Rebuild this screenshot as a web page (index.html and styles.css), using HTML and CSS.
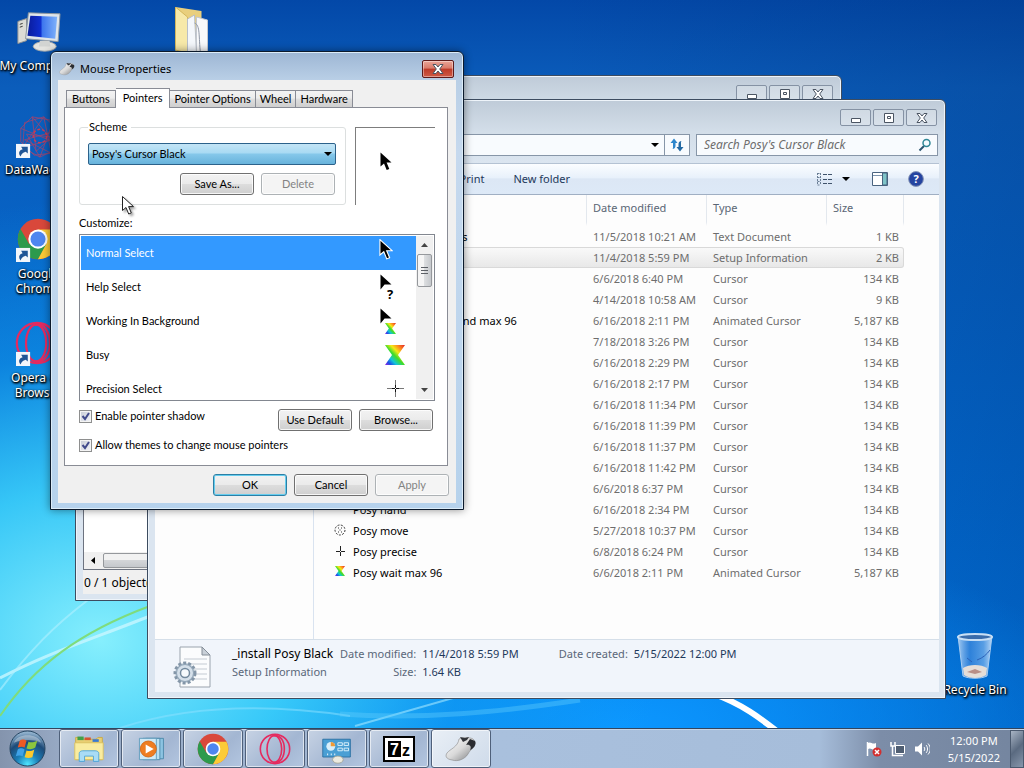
FILE: index.html
```html
<!DOCTYPE html>
<html lang="en">
<head>
    <meta charset="UTF-8">
    <meta name="viewport" content="width=device-width, initial-scale=1.0">
    <title>Desktop</title>
    <link rel="stylesheet" href="styles.css">
</head>
<body>
    <!-- Shared icons -->
    <svg class="sprite" aria-hidden="true">
        <defs>
            <linearGradient id="rainbow" x1="1" y1="0" x2="0" y2="1">
                <stop offset="0" stop-color="#e0202a"/>
                <stop offset=".2" stop-color="#ff8a1c"/>
                <stop offset=".36" stop-color="#f4e916"/>
                <stop offset=".52" stop-color="#3fdc28"/>
                <stop offset=".7" stop-color="#12c6d8"/>
                <stop offset=".85" stop-color="#1d50e8"/>
                <stop offset="1" stop-color="#a020e0"/>
            </linearGradient>
            <linearGradient id="mouse-fill" x1="0" y1="0" x2="1" y2="1">
                <stop offset="0" stop-color="#ffffff"/>
                <stop offset=".5" stop-color="#d9d9d9"/>
                <stop offset="1" stop-color="#77797c"/>
            </linearGradient>
            <linearGradient id="screen" x1="0" y1="0" x2="1" y2="0">
                <stop offset="0" stop-color="#0a1c9c"/>
                <stop offset=".45" stop-color="#0f2fd0"/>
                <stop offset=".5" stop-color="#3d76ee"/>
                <stop offset="1" stop-color="#7fb2fa"/>
            </linearGradient>
            <linearGradient id="glass" x1="0" y1="0" x2="1" y2="0">
                <stop offset="0" stop-color="#b5d5f5" stop-opacity=".9"/>
                <stop offset=".35" stop-color="#4b8fe0" stop-opacity=".6"/>
                <stop offset=".75" stop-color="#7db4ee" stop-opacity=".7"/>
                <stop offset="1" stop-color="#cfe4fa" stop-opacity=".9"/>
            </linearGradient>
            <radialGradient id="orb" cx=".5" cy=".95" r=".9">
                <stop offset="0" stop-color="#4fe6ff"/>
                <stop offset=".35" stop-color="#1a7fb8"/>
                <stop offset=".7" stop-color="#1d4a78"/>
                <stop offset="1" stop-color="#8fb0cc"/>
            </radialGradient>
        </defs>
        <symbol id="arrow" viewBox="0 0 12 19">
            <path d="M0.5 0.5V14.5L4 11.5L6.7 18L9.3 16.9L6.6 10.6H11.5Z"/>
        </symbol>
        <symbol id="arrow-head" viewBox="0 0 12 16">
            <path d="M0.5 0.5V15.5L4.6 10.6H11.5Z"/>
        </symbol>
        <symbol id="hourglass" viewBox="0 0 20 20">
            <path d="M0 0H20L13 10L20 20H0L7 10Z" fill="url(#rainbow)"/>
        </symbol>
        <symbol id="crosshair" viewBox="0 0 17 17">
            <path d="M8.5 0V17M0 8.5H17" stroke="#777" fill="none"/>
            <path d="M8.500 5V12M5 8.500H12" stroke="#111" fill="none"/>
            <path d="M8 8H9V9H8Z" fill="#fff"/>
        </symbol>
        <symbol id="chrome" viewBox="0 0 48 48">
            <circle cx="24" cy="24" r="23" fill="#d9483b"/>
            <path d="M4.100 12.500A23 23 0 0 0 24 47L34 29.800L24 24L14 29.800Z" fill="#2c9a4d"/>
            <path d="M24 13H44.200A23 23 0 0 1 24 47L33.500 29.500Z" fill="#fbcb37"/>
            <circle cx="24" cy="24" r="11" fill="#fff"/>
            <circle cx="24" cy="24" r="8.600" fill="#4e86f0"/>
        </symbol>
        <symbol id="opera" viewBox="0 0 48 48">
            <g fill="none" stroke="#e52a5f" stroke-width="2.400">
                <circle cx="24" cy="24" r="22"/>
                <ellipse cx="23" cy="24" rx="11" ry="20"/>
                <path d="M22 4C32 2 38 12 38 24S32 46 22 44"/>
            </g>
        </symbol>
        <symbol id="shortcut" viewBox="0 0 14 14">
            <path d="M0 0H14V14H0Z" fill="#f2f6fb"/>
            <path d="M4.500 12.500C2 9.500 3 6.500 6.500 5.500L5 3H11.500V9.500L9.500 7.800C6.500 8.500 5.500 10 4.500 12.500Z" fill="#1f5596"/>
        </symbol>
        <symbol id="mouse" viewBox="0 0 32 26">
            <path d="M14 3C18 1 27 1 29 4C31 7 30 9 27 10C29 12 25 14 23 18C20 23 13 26 7 24C1 23 0 20 2 17C5 13 13 11 14 3Z" fill="url(#mouse-fill)" stroke="#888" stroke-width=".6"/>
            <path d="M21 9L25 3L30 5C32 9 28 13 25 14C27 11 25 8 21 9Z" fill="#2a2c30"/>
            <path d="M15 1L18 6L22 4L24 1L20 2Z" fill="#33353a"/>
        </symbol>
        <symbol id="minimize" viewBox="0 0 12 10">
            <path d="M1.500 5.500H10.500V9.500H1.500Z" fill="#fff" stroke="#4b5563"/>
        </symbol>
        <symbol id="restore" viewBox="0 0 12 10">
            <path d="M1.500 .5H10.500V9.500H1.500Z" fill="#fff" stroke="#4b5563"/>
            <path d="M4.500 3.500H7.500V5.500H4.500Z" fill="#fff" stroke="#4b5563"/>
        </symbol>
        <symbol id="close" viewBox="0 0 12 10">
            <path d="M1 .5H4L6 3L8 .5H11L7.700 5L11 9.500H8L6 7L4 9.500H1L4.300 5Z" fill="#fff" stroke="#4b5563"/>
        </symbol>
        <symbol id="down" viewBox="0 0 8 4">
            <path d="M0 0H8L4 4Z"/>
        </symbol>
    </svg>

    <main class="desktop">
        <svg class="wallpaper" viewBox="0 0 1024 728" preserveAspectRatio="none" aria-hidden="true">
            <g fill="none">
                <path d="M0 678C50 652 95 638 150 616" stroke="#c8f6ff" stroke-width="3" opacity=".8"/>
                <path d="M0 690C30 650 55 625 88 600" stroke="#b0f0ff" stroke-width="2" opacity=".6"/>
                <path d="M0 716C35 665 80 632 150 606" stroke="#7fdc7c" stroke-width="2"/>
                <path d="M120 728C190 705 270 704 350 716" stroke="#8fe2ff" stroke-width="2" opacity=".5"/>
                <path d="M355 726L460 696" stroke="#a5e8ff" stroke-width="2" opacity=".6"/>
                <path d="M340 714C420 720 500 712 580 700" stroke="#62cdfc" stroke-width="5" opacity=".4"/>
                <path d="M714 694C742 704 760 718 778 732" stroke="#fff" stroke-width="6"/>
            </g>
        </svg>

        <!-- Desktop icons -->
        <ul class="icons">
            <li>
                <svg viewBox="0 0 48 48">
                    <path d="M3 13L12 10V33L3 36Z" fill="#dcdcd6" stroke="#8b8f92"/>
                    <path d="M5 16L8 15M5 19L8 18" stroke="#333"/>
                    <path d="M14 4L47 5L45 34L11 31Z" fill="#dfe5ea" stroke="#8c959d"/>
                    <path d="M16 7L44 8L42 31L13 28Z" fill="url(#screen)"/>
                    <ellipse cx="31" cy="39" rx="12" ry="5" fill="#e4e4e0" stroke="#a5a8a8"/>
                    <path d="M26 33H36L37 39H25Z" fill="#d2d4d2"/>
                </svg>
                <span>My&nbsp;Computer</span>
            </li>
            <li>
                <svg viewBox="0 0 48 48">
                    <g fill="none" stroke="#a2446e" stroke-width=".8">
                        <path d="M6 16L18 4L40 8L46 26L38 42L20 44L6 30ZM10 10L30 4L46 18L42 38L26 46L8 36Z"/>
                        <path d="M6 16L40 30L18 4L22 40L46 18L10 28L38 42L30 4L8 36L46 26L12 22L26 46L40 8"/>
                    </g>
                    <circle cx="26" cy="24" r="7" fill="none" stroke="#d03a50" stroke-width="1.500" stroke-dasharray="3 2"/>
                    <use href="#shortcut" x="1" y="32" width="15" height="15"/>
                </svg>
                <span>DataWagon</span>
            </li>
            <li>
                <svg viewBox="0 0 48 48">
                    <use href="#chrome" x="2" y="1" width="44" height="44"/>
                    <use href="#shortcut" x="1" y="32" width="15" height="15"/>
                </svg>
                <span>Google Chrome</span>
            </li>
            <li>
                <svg viewBox="0 0 48 48">
                    <use href="#opera" width="46" height="46"/>
                    <use href="#shortcut" x="1" y="32" width="15" height="15"/>
                </svg>
                <span>Opera GX Browser</span>
            </li>
        </ul>

        <svg class="desktop-folder" viewBox="0 0 34 46" aria-hidden="true">
            <path d="M1 0L27 4V46H1Z" fill="#e9cf7d"/>
            <path d="M1 0L13 10V46L1 43Z" fill="#f7e9a9" stroke="#d4b75c"/>
            <path d="M13 12L20 8L22 46H13Z" fill="#f4f7fb" stroke="#b8bfc9"/>
            <path d="M22 10L33 13V46H22Z" fill="#f8f9fb" stroke="#c3c8d0"/>
            <path d="M20 16C26 18 24 30 26 46" fill="none" stroke="#8f97a6"/>
        </svg>

        <div class="recycle-bin">
            <svg viewBox="0 0 40 48">
                <path d="M3 4L8 44C14 47 26 47 32 44L37 4Z" fill="url(#glass)" stroke="#a9cdf2"/>
                <path d="M8 36C14 32 26 32 32 36L31 43C26 47 14 47 9 43Z" fill="#e5ded8"/>
                <path d="M12 40L20 37L27 40L20 42Z" fill="#b98f87"/>
                <path d="M12 26L17 30M22 28C28 26 32 22 35 18" fill="none" stroke="#2c62b8"/>
                <ellipse cx="20" cy="5" rx="17" ry="3" fill="#3a6cab" stroke="#c8dff5" stroke-width="2"/>
            </svg>
            <span>Recycle Bin</span>
        </div>

        <!-- Archive window -->
        <section class="window archive" aria-label="Archive">
            <div class="title-bar">
                <button type="button" aria-label="Minimize"><svg><use href="#minimize"/></svg></button>
                <button type="button" aria-label="Restore"><svg><use href="#restore"/></svg></button>
                <button type="button" aria-label="Close"><svg><use href="#close"/></svg></button>
            </div>
            <div class="archive-list">
                <div class="h-scroll">
                    <svg viewBox="0 0 4 7"><path d="M4 0V7L0 3.500Z"/></svg>
                    <div class="h-thumb"></div>
                </div>
            </div>
            <div class="archive-status">0 / 1 object(s) selected</div>
        </section>

        <!-- Explorer window -->
        <section class="window explorer" aria-label="Posy's Cursor Black">
            <div class="title-bar">
                <button type="button" aria-label="Minimize"><svg><use href="#minimize"/></svg></button>
                <button type="button" aria-label="Restore"><svg><use href="#restore"/></svg></button>
                <button type="button" aria-label="Close"><svg><use href="#close"/></svg></button>
            </div>
            <div class="address-row">
                <div class="address">
                    <svg class="caret"><use href="#down"/></svg>
                    <button type="button" class="refresh" aria-label="Refresh">
                        <svg viewBox="0 0 16 16">
                            <path d="M1.500 6L5 1.500L8.500 6H6.500V9C6.500 11 5 12 3.500 12C4.300 11 4 10 4 9V6Z" fill="#2d86cc"/>
                            <path d="M14.500 10L11 14.500L7.500 10H9.500V7C9.500 5 11 4 12.500 4C11.700 5 12 6 12 7V10Z" fill="#2369a3"/>
                        </svg>
                    </button>
                </div>
                <div class="search">
                    <input type="text" placeholder="Search Posy's Cursor Black" aria-label="Search Posy's Cursor Black">
                    <svg viewBox="0 0 14 14">
                        <path d="M1.500 12.500L6 8" stroke="#2a5470" stroke-width="2"/>
                        <circle cx="8.500" cy="5" r="3.500" fill="#f4fbff" stroke="#2f8796" stroke-width="1.500"/>
                    </svg>
                </div>
            </div>
            <div class="toolbar">
                <button type="button">Organize</button>
                <button type="button">Install</button>
                <button type="button">Print</button>
                <button type="button">New folder</button>
                <div class="view-tools">
                    <svg width="16" height="14" viewBox="0 0 16 14">
                        <path d="M.5 1.500H3.500M.5 5.500H3.500M.5 9.500H3.500M.5 13H3.500M.5 1V13M3.500 1V13" stroke="#6b7f96" stroke-dasharray="2 1"/>
                        <path d="M6 2.500H15M6 7.500H15M6 11.500H15" stroke="#3f536b" stroke-dasharray="4 1"/>
                    </svg>
                    <svg class="caret"><use href="#down"/></svg>
                    <svg class="pane-icon" width="16" height="14" viewBox="0 0 16 14">
                        <path d="M.5 .5H15.500V13.500H.5Z" fill="#fff" stroke="#49637f"/>
                        <path d="M1 3.500H10" stroke="#7d95b0"/>
                        <path d="M10.500 1H15V13H10.500Z" fill="#7fc4c8" stroke="#49637f"/>
                    </svg>
                    <svg width="16" height="16" viewBox="0 0 16 16">
                        <circle cx="8" cy="8" r="7.400" fill="#2544a0" stroke="#8796b8"/>
                        <text class="help-mark" x="8" y="12">?</text>
                    </svg>
                </div>
            </div>
            <div class="explorer-body">
                <div class="nav-pane"></div>
                <table class="files">
                    <thead>
                        <tr>
                            <th class="name"></th>
                            <th class="date">Date modified</th>
                            <th class="type">Type</th>
                            <th class="size">Size</th>
                        </tr>
                    </thead>
                    <tbody>
                        <tr><td>How to install: cursors</td><td>11/5/2018 10:21 AM</td><td>Text Document</td><td>1 KB</td></tr>
                        <tr class="selected"><td></td><td>11/4/2018 5:59 PM</td><td>Setup Information</td><td>2 KB</td></tr>
                        <tr><td></td><td>6/6/2018 6:40 PM</td><td>Cursor</td><td>134 KB</td></tr>
                        <tr><td></td><td>4/14/2018 10:58 AM</td><td>Cursor</td><td>9 KB</td></tr>
                        <tr><td>Posy pause background max 96</td><td>6/16/2018 2:11 PM</td><td>Animated Cursor</td><td>5,187 KB</td></tr>
                        <tr><td></td><td>7/18/2018 3:26 PM</td><td>Cursor</td><td>134 KB</td></tr>
                        <tr><td></td><td>6/16/2018 2:29 PM</td><td>Cursor</td><td>134 KB</td></tr>
                        <tr><td></td><td>6/16/2018 2:17 PM</td><td>Cursor</td><td>134 KB</td></tr>
                        <tr><td></td><td>6/16/2018 11:34 PM</td><td>Cursor</td><td>134 KB</td></tr>
                        <tr><td></td><td>6/16/2018 11:39 PM</td><td>Cursor</td><td>134 KB</td></tr>
                        <tr><td></td><td>6/16/2018 11:37 PM</td><td>Cursor</td><td>134 KB</td></tr>
                        <tr><td></td><td>6/16/2018 11:42 PM</td><td>Cursor</td><td>134 KB</td></tr>
                        <tr><td></td><td>6/6/2018 6:37 PM</td><td>Cursor</td><td>134 KB</td></tr>
                        <tr><td>Posy hand</td><td>6/16/2018 2:34 PM</td><td>Cursor</td><td>134 KB</td></tr>
                        <tr>
                            <td><svg viewBox="0 0 14 14"><circle cx="7" cy="7" r="5" fill="none" stroke="#333" stroke-dasharray="2 1.400"/><path d="M5 5H6M8 5H9M5 9H6M8 9H9M7 6.500V7.500" stroke="#333"/></svg>Posy move</td>
                            <td>5/27/2018 10:37 PM</td><td>Cursor</td><td>134 KB</td>
                        </tr>
                        <tr>
                            <td><svg viewBox="0 0 14 14"><path d="M7.500 2V7M7.500 8V12M3 7.500H7M8 7.500H12" stroke="#222"/></svg>Posy precise</td>
                            <td>6/8/2018 6:24 PM</td><td>Cursor</td><td>134 KB</td>
                        </tr>
                        <tr>
                            <td><svg viewBox="0 0 14 14"><use href="#hourglass" x="1" y="1" width="12" height="10"/></svg>Posy wait max 96</td>
                            <td>6/6/2018 2:11 PM</td><td>Animated Cursor</td><td>5,187 KB</td>
                        </tr>
                    </tbody>
                </table>
            </div>
            <div class="details">
                <svg class="details-icon" viewBox="0 0 40 44">
                    <path d="M8 2H30L38 10V42H8Z" fill="#fbfcfd" stroke="#9aa3ad"/>
                    <path d="M30 2V10H38Z" fill="#c9d0d8" stroke="#858e98"/>
                    <path d="M12 14H35M12 19H35M12 24H35M12 29H35M12 34H35" stroke="#c4cbd3"/>
                    <circle cx="13" cy="28" r="10" fill="#b9c7d4" stroke="#8496a8" stroke-width="3" stroke-dasharray="3 2"/>
                    <circle cx="13" cy="28" r="8.500" fill="#d5e0ea" stroke="#8fa3b5"/>
                    <circle cx="13" cy="28" r="4.500" fill="#f6fafd" stroke="#748a9e" stroke-width="1.500"/>
                </svg>
                <div class="details-name">
                    <strong>_install Posy Black</strong>
                    <span>Setup Information</span>
                </div>
                <dl class="details-info">
                    <dt>Date modified:</dt><dd>11/4/2018 5:59 PM</dd>
                    <dt>Size:</dt><dd>1.64 KB</dd>
                </dl>
                <dl class="details-info">
                    <dt>Date created:</dt><dd>5/15/2022 12:00 PM</dd>
                </dl>
            </div>
        </section>

        <!-- Mouse Properties dialog -->
        <section class="dialog" role="dialog" aria-label="Mouse Properties">
            <div class="dialog-title">
                <svg class="mouse-icon"><use href="#mouse"/></svg>
                <h1>Mouse Properties</h1>
                <button type="button" class="dialog-close" aria-label="Close"><svg><use href="#close"/></svg></button>
            </div>
            <form class="dialog-client">
                <div class="tabs" role="tablist">
                    <button type="button" role="tab">Buttons</button>
                    <button type="button" role="tab" class="active" aria-selected="true">Pointers</button>
                    <button type="button" role="tab">Pointer Options</button>
                    <button type="button" role="tab">Wheel</button>
                    <button type="button" role="tab">Hardware</button>
                </div>
                <div class="panel">
                    <div class="scheme-row">
                        <fieldset>
                            <legend>Scheme</legend>
                            <div class="combo">
                                <select aria-label="Scheme">
                                    <option>Posy's Cursor Black</option>
                                </select>
                                <svg class="caret"><use href="#down"/></svg>
                            </div>
                            <div class="buttons">
                                <button type="button" class="btn">Save As...</button>
                                <button type="button" class="btn" disabled>Delete</button>
                            </div>
                        </fieldset>
                        <div class="preview"><svg class="pointer"><use href="#arrow"/></svg></div>
                    </div>

                    <div class="list-label" id="customize">Customize:</div>
                    <div class="list">
                        <ul role="listbox" aria-labelledby="customize">
                            <li class="selected" role="option" aria-selected="true">Normal Select
                                <svg viewBox="0 0 32 32"><use href="#arrow" x="0" y="2" width="14" height="21" stroke="#fff"/></svg>
                            </li>
                            <li role="option">Help Select
                                <svg viewBox="0 0 32 32"><use href="#arrow-head" x="1" y="3" width="12" height="16"/><text class="question" x="11" y="28">?</text></svg>
                            </li>
                            <li role="option">Working In Background
                                <svg viewBox="0 0 32 32"><use href="#arrow-head" x="1" y="3" width="12" height="16"/><use href="#hourglass" x="6" y="18" width="11" height="11"/></svg>
                            </li>
                            <li role="option">Busy
                                <svg viewBox="0 0 32 32"><use href="#hourglass" x="6" y="6" width="20" height="20"/></svg>
                            </li>
                            <li role="option">Precision Select
                                <svg viewBox="0 0 32 32"><use href="#crosshair" x="8" y="7" width="17" height="17"/></svg>
                            </li>
                        </ul>
                        <div class="v-scroll">
                            <svg viewBox="0 0 7 4"><path d="M0 4H7L3.500 0Z"/></svg>
                            <div class="v-thumb"></div>
                            <svg viewBox="0 0 7 4"><path d="M0 0H7L3.500 4Z"/></svg>
                        </div>
                    </div>

                    <div class="options">
                        <label><input type="checkbox" checked>Enable pointer shadow</label>
                        <div class="buttons">
                            <button type="button" class="btn">Use Default</button>
                            <button type="button" class="btn">Browse...</button>
                        </div>
                    </div>
                    <div class="options">
                        <label><input type="checkbox" checked>Allow themes to change mouse pointers</label>
                    </div>
                </div>
                <div class="buttons">
                    <button type="button" class="btn default">OK</button>
                    <button type="button" class="btn">Cancel</button>
                    <button type="button" class="btn" disabled>Apply</button>
                </div>
            </form>
        </section>

        <svg class="mouse-cursor" aria-hidden="true"><use href="#arrow" width="12" height="19"/></svg>
    </main>

    <!-- Taskbar -->
    <footer class="taskbar">
        <button type="button" class="start" aria-label="Start">
            <svg viewBox="0 0 38 38">
                <circle cx="19" cy="19" r="18" fill="url(#orb)" stroke="#24435f"/>
                <path d="M5 13C9 3 29 3 33 13C25 9 13 10 5 13Z" fill="#fff" opacity=".35"/>
                <path d="M11 11C14 9 16 10 18 11L16 18C14 17 12 17 9 18Z" fill="#ee5a24"/>
                <path d="M20 12C22 13 25 13 29 11L27 18C24 20 21 20 18 19Z" fill="#8cc63e"/>
                <path d="M9 20C12 18 14 19 16 20L14 27C12 26 9 26 7 27Z" fill="#3fa2e8"/>
                <path d="M18 21C20 22 23 22 26 20L24 28C21 29 19 29 16 28Z" fill="#fbc92c"/>
            </svg>
        </button>
        <nav class="task-buttons">
            <button type="button" aria-label="Explorer">
                <svg viewBox="0 0 36 32">
                    <path d="M3 3H10L12 5H26L28 3H33V28H3Z" fill="#e8cf72" stroke="#c9a945"/>
                    <path d="M5 2H12V6H5Z" fill="#43a047"/><path d="M13 3H20V6H13Z" fill="#d6552d"/><path d="M22 5H29V8H22Z" fill="#3a7ad0"/>
                    <path d="M2 9H34V28H2Z" fill="#f9ec9f" stroke="#d9bf5e"/>
                    <path d="M7 30V21C7 19 9 18 11 18H25C27 18 29 19 29 21V30H23V24H13V30Z" fill="#a9dcf5" stroke="#4aa3d8"/>
                </svg>
            </button>
            <button type="button" aria-label="Media Player">
                <svg viewBox="0 0 36 32">
                    <path d="M12 4H32V27H12Z" fill="#8cc4e2" stroke="#4a86a8"/>
                    <path d="M9 4H28V28H9Z" fill="#b9e0f2" stroke="#4a86a8"/>
                    <path d="M5 4H24V28H5Z" fill="#cfe9f6" stroke="#5d99ba"/>
                    <circle cx="15" cy="16" r="9" fill="#ee7d22" stroke="#d2691a"/>
                    <path d="M12 11L21 16L12 21Z" fill="#fff"/>
                </svg>
            </button>
            <button type="button" aria-label="Chrome"><svg><use href="#chrome"/></svg></button>
            <button type="button" aria-label="Opera"><svg><use href="#opera"/></svg></button>
            <button type="button" aria-label="Control Panel">
                <svg viewBox="0 0 36 32">
                    <path d="M2 5H33V25H2Z" fill="#4a9fd4" stroke="#2a6fa0"/>
                    <circle cx="11" cy="13" r="5" fill="#d9effa"/>
                    <path d="M11 13V8A5 5 0 0 1 16 13Z" fill="#f09a35"/>
                    <path d="M19 9H24V12H19ZM26 9H31V12H26ZM19 15H24V18H19ZM26 15H31V18H26Z" fill="#4a9fd4" stroke="#e5f6fd"/>
                    <path d="M7 22H8M11 22H12M15 22H16" stroke="#fff" stroke-width="2"/>
                    <ellipse cx="19" cy="28" rx="6" ry="4" fill="#eceadf" stroke="#a5a596"/>
                </svg>
            </button>
            <button type="button" aria-label="7-Zip">
                <svg class="zip-icon" viewBox="0 0 32 26">
                    <path d="M1 1H31V25H1Z" fill="#fff" stroke="#000" stroke-width="2"/>
                    <path d="M5 5H18V21H5Z"/>
                    <text class="zip-seven" x="7" y="19">7</text>
                    <text x="19" y="20">z</text>
                </svg>
            </button>
            <button type="button" class="active" aria-label="Mouse Properties"><svg><use href="#mouse"/></svg></button>
        </nav>
        <div class="tray">
            <svg width="16" height="16" viewBox="0 0 16 16">
                <path d="M1.500 1V15" stroke="#fff" stroke-width="1.500"/>
                <path d="M2 2C5 0 6 4 10 2V8C6 10 5 6 2 8Z" fill="#fff"/>
                <circle cx="11" cy="11" r="4.500" fill="#d32f2f"/>
                <path d="M9 9L13 13M13 9L9 13" stroke="#fff" stroke-width="1.500"/>
            </svg>
            <svg width="16" height="16" viewBox="0 0 16 16">
                <path d="M5.500 4.500H14.500V12.500H5.500Z" fill="#4f5e72" stroke="#fff"/>
                <path d="M7 14.500H13M2.500 5V14.500H8M1 1V5H5V1" fill="none" stroke="#fff" stroke-width="1.500"/>
            </svg>
            <svg width="16" height="16" viewBox="0 0 16 16">
                <path d="M1 5.500H4L8 1.500V14.500L4 10.500H1Z" fill="#fff"/>
                <path d="M10 6C11 7 11 9 10 10M12 4C14 6 14 10 12 12M14 2.500C17 6 17 10 14 13.500" fill="none" stroke="#fff"/>
            </svg>
        </div>
        <div class="clock">
            <span>12:00 PM</span>
            <span>5/15/2022</span>
        </div>
        <button type="button" class="show-desktop" aria-label="Show desktop"></button>
    </footer>
</body>
</html>
```
FILE: styles.css
```css
/* Global Styles */
* {
    box-sizing: border-box;
}

body {
    --ui: "Noto Sans", "Open Sans", sans-serif;
    --dialog: Lato, "Liberation Sans", sans-serif;
    display: flex;
    flex-direction: column;
    height: 100vh;
    margin: 0;
    overflow: hidden;
    font-family: var(--ui);
    font-size: 11px;
    line-height: 15px;
    color: #000;
}

button,
input,
select {
    font: inherit;
    color: inherit;
    margin: 0;
}

button {
    display: flex;
    align-items: center;
    justify-content: center;
    padding: 0;
    border: none;
    background: none;
}

ul {
    margin: 0;
    padding: 0;
    list-style: none;
}

svg {
    flex: none;
}

.sprite {
    position: absolute;
    width: 0;
    height: 0;
}

.caret {
    width: 8px;
    height: 4px;
}

/* Desktop */
.desktop {
    position: relative;
    flex: 1;
    overflow: hidden;
    background:
        radial-gradient(ellipse 560px 440px at 100px 640px, #86effd 0%, rgba(60, 208, 250, 0.9) 35%, rgba(20, 160, 240, 0.5) 65%, rgba(0, 120, 230, 0) 100%),
        radial-gradient(ellipse 500px 200px at 620px 728px, #0c97ff 0%, rgba(0, 130, 240, 0) 100%),
        linear-gradient(90deg, rgba(0, 60, 140, 0) 55%, rgba(0, 50, 120, 0.3) 100%),
        linear-gradient(#0348a8 0%, #0b5dbb 12%, #0564c8 40%, #0078e6 100%);
}

.wallpaper {
    position: absolute;
    inset: 0;
    width: 100%;
    height: 100%;
}

.icons {
    position: absolute;
    left: 0;
    top: 0;
    width: 76px;
}

.icons li,
.recycle-bin {
    display: flex;
    flex-direction: column;
    align-items: center;
    gap: 2px;
    height: 104px;
    padding-top: 8px;
    color: #fff;
    font-size: 12px;
    text-align: center;
    text-shadow: 0 1px 2px #000, 1px 1px 2px #000, 1px 1px 3px #000;
}

.icons svg {
    width: 46px;
    height: 48px;
}

.desktop-folder {
    position: absolute;
    left: 174px;
    top: 7px;
    width: 35px;
    height: 46px;
}

.recycle-bin {
    position: absolute;
    right: 10px;
    bottom: 0;
    width: 78px;
}

.recycle-bin svg {
    width: 40px;
    height: 48px;
}

/* Windows */
.window {
    position: absolute;
    display: flex;
    flex-direction: column;
    padding: 0 6px 6px 7px;
    border: 1px solid #3d4c60;
    border-radius: 6px 6px 0 0;
    background: linear-gradient(#bfcbd8 0, #d3dee9 32px, #dbe5f0 64px);
    box-shadow: inset 0 0 0 1px #eef4fa;
}

.title-bar {
    display: flex;
    justify-content: flex-end;
    gap: 2px;
    height: 34px;
    padding: 9px 2px 0 0;
}

.title-bar button {
    width: 31px;
    height: 17px;
    border: 1px solid #8592a4;
    border-radius: 2px;
    background: rgba(255, 255, 255, 0.2);
}

.title-bar svg,
.dialog-close svg {
    width: 12px;
    height: 10px;
}

/* Archive window */
.archive {
    left: 75px;
    right: 182px;
    top: 75px;
    bottom: 127px;
}

.archive-list {
    display: flex;
    flex: 1;
    align-items: flex-end;
    border: 1px solid #6d7380;
    background: #fff;
}

.h-scroll {
    display: flex;
    flex: 1;
    align-items: center;
    gap: 8px;
    height: 17px;
    padding-left: 7px;
    background: #f0f0f0;
}

.h-scroll svg {
    width: 4px;
    height: 7px;
}

.h-thumb {
    width: 300px;
    height: 15px;
    border: 1px solid #95989c;
    border-radius: 2px;
    background: linear-gradient(#f2f2f2 45%, #d3d5d8 50%, #c5c8cc);
}

.archive-status {
    padding: 5px 1px 4px;
    background: #f0f0f0;
    font-size: 12px;
}

/* Explorer window */
.explorer {
    left: 147px;
    right: 78px;
    top: 99px;
    bottom: 29px;
}

.address-row {
    display: flex;
    gap: 6px;
    height: 29px;
    padding-right: 1px;
}

.address,
.search {
    display: flex;
    align-items: center;
    height: 22px;
    border: 1px solid #8796a8;
    background: #f8fbfe;
}

.address {
    flex: 1;
    justify-content: flex-end;
    gap: 5px;
}

.refresh {
    width: 25px;
    height: 20px;
    border-left: 1px solid #8796a8;
}

.refresh svg {
    width: 16px;
    height: 16px;
}

.search {
    width: 242px;
    padding: 0 5px 0 7px;
}

.search input {
    flex: 1;
    min-width: 0;
    padding: 0 0 2px;
    border: none;
    outline: none;
    background: none;
    font-size: 12px;
}

.search input::placeholder {
    color: #6d6d6d;
    font-style: italic;
}

.search svg {
    width: 14px;
    height: 14px;
}

.toolbar {
    display: flex;
    align-items: center;
    gap: 29px;
    height: 32px;
    padding: 0 15px 0 168px;
    border-top: 1px solid #b4c2d3;
    border-bottom: 1px solid #a0afc3;
    background: linear-gradient(#fbfdff, #e8f1fb 45%, #dce7f5 50%, #dde9f7);
    color: #1e395b;
}

.toolbar button {
    padding-bottom: 2px;
}

.view-tools {
    display: flex;
    align-items: center;
    gap: 9px;
    margin-left: auto;
    color: #1e2a3a;
}

.pane-icon {
    margin: 0 11px 0 13px;
}

.help-mark {
    fill: #fff;
    font-weight: bold;
    text-anchor: middle;
}

.explorer-body {
    display: flex;
    flex: 1;
    background: #fdfdfd;
}

.nav-pane {
    width: 159px;
    border-right: 1px solid #d9e3f0;
}

.files {
    align-self: flex-start;
    table-layout: fixed;
    width: 577px;
    margin-left: 13px;
    border-spacing: 0;
    color: #6d6d6d;
}

.files th {
    height: 31px;
    padding: 0 6px 3px;
    border-right: 1px solid #e3e8ee;
    border-bottom: 4px solid #fdfdfd;
    color: #5a6675;
    font-weight: normal;
    text-align: left;
}

.files .name {
    width: 260px;
}

.files .date,
.files .type {
    width: 120px;
}

.files td {
    height: 21px;
    padding: 0 6px;
    border-top: 1px solid transparent;
    border-bottom: 1px solid transparent;
    white-space: nowrap;
}

.files td:first-child {
    position: relative;
    padding-left: 26px;
    color: #000;
}

.files td:last-child {
    padding-right: 5px;
    text-align: right;
}

.files td svg {
    position: absolute;
    left: 6px;
    top: 2px;
    width: 14px;
    height: 14px;
}

.files .selected td {
    border-color: #d9d9d9;
    background: linear-gradient(#f9f9f9, #e8e8e8);
}

.files .selected td:last-child {
    padding-right: 4px;
    border-right: 1px solid #d9d9d9;
    border-radius: 0 3px 3px 0;
}

.details {
    display: flex;
    height: 53px;
    padding: 5px 17px;
    border-top: 1px solid #d5dfe9;
    background: #f1f5fb;
    line-height: 18px;
}

.details-icon {
    width: 40px;
    height: 44px;
    margin-right: 20px;
}

.details-name {
    display: flex;
    flex-direction: column;
    width: 108px;
    white-space: nowrap;
}

.details-name strong {
    font-size: 12px;
    font-weight: normal;
}

.details-name span,
.details-info dt {
    color: #5a6779;
}

.details-info {
    display: grid;
    grid-template-columns: auto auto;
    grid-auto-rows: 18px;
    column-gap: 6px;
    margin: 0 40px 0 0;
}

.details-info dt {
    text-align: right;
}

.details-info dd {
    margin: 0;
    color: #1e395b;
}

/* Mouse Properties dialog */
.dialog {
    position: absolute;
    left: 50px;
    top: 51px;
    width: 414px;
    padding: 0 7px 6px;
    border: 1px solid #0c1a2c;
    border-radius: 6px 6px 0 0;
    background: linear-gradient(#9db6d4 0, #b9cfe6 28px, #c6d9ee 100px, #b6d2ec);
    box-shadow: inset 0 0 0 1px #dcecf8, 0 0 8px rgba(0, 0, 0, 0.45);
}

.dialog-title {
    display: flex;
    align-items: center;
    height: 28px;
    padding: 5px 2px 0 1px;
}

.mouse-icon {
    width: 16px;
    height: 14px;
    margin-right: 5px;
}

.dialog-title h1 {
    flex: 1;
    margin: 0;
    font-size: 11px;
    font-weight: normal;
}

.dialog-close {
    width: 32px;
    height: 18px;
    border: 1px solid #5d1a1a;
    border-radius: 2px;
    background: linear-gradient(#eaa598, #d97a6a 45%, #bd3a28 50%, #cf5a45);
    box-shadow: inset 0 0 0 1px rgba(255, 255, 255, 0.4);
}

.dialog-client {
    padding: 8px 6px 7px;
    background: #f0f0f0;
    font-family: var(--dialog);
    font-size: 11px;
    line-height: 14px;
}

.tabs {
    display: flex;
    align-items: flex-end;
    height: 20px;
    padding-left: 2px;
}

.tabs button {
    height: 18px;
    padding: 0 4px;
    border: 1px solid #898c95;
    border-left-width: 0;
    background: linear-gradient(#f3f3f3, #ececec 45%, #dedede 50%, #cfcfcf);
}

.tabs button:first-child {
    border-left-width: 1px;
    padding: 0 5px;
}

.tabs .active {
    position: relative;
    height: 20px;
    padding: 0 7px 2px;
    border-bottom: none;
    background: #fff;
}

.panel {
    margin: -1px 2px 8px 0;
    padding: 12px 12px 13px 14px;
    border: 1px solid #898c95;
    background: #fff;
}

.scheme-row {
    display: flex;
    align-items: flex-end;
    gap: 9px;
}

fieldset {
    flex: 1;
    min-width: 0;
    margin: 0;
    padding: 9px 9px 9px 8px;
    border: 1px solid #dcdfdf;
    border-radius: 3px;
}

legend {
    padding: 0 4px 0 1px;
}

.combo {
    position: relative;
    margin-bottom: 8px;
}

.combo select {
    display: block;
    width: 100%;
    height: 22px;
    padding: 0 3px;
    appearance: none;
    border: 1px solid #2c628b;
    border-radius: 2px;
    background: linear-gradient(#c4e5f6, #a8daf3 45%, #86c8ea 50%, #68b3db);
}

.combo .caret {
    position: absolute;
    right: 4px;
    top: 9px;
}

.buttons {
    display: flex;
    justify-content: flex-end;
    gap: 7px;
    padding-right: 1px;
}

.btn {
    width: 74px;
    height: 22px;
    border: 1px solid #707070;
    border-radius: 3px;
    background: linear-gradient(#f2f2f2, #ebebeb 48%, #dddddd 50%, #cfcfcf);
    box-shadow: inset 0 0 0 1px rgba(255, 255, 255, 0.8);
}

.btn.default {
    border-color: #2c7fa5;
    box-shadow: inset 0 0 0 1px #66cdee;
}

.btn:disabled {
    border-color: #adb2b5;
    background: #f4f4f4;
    color: #838383;
}

.preview {
    width: 80px;
    height: 78px;
    padding: 24px;
    border-top: 1px solid #7d7d7d;
    border-left: 1px solid #7d7d7d;
}

.pointer {
    width: 12px;
    height: 19px;
}

.list-label {
    margin: 11px 0 4px;
}

.list {
    display: flex;
    height: 167px;
    margin-bottom: 8px;
    padding: 1px;
    border: 1px solid #828790;
}

.list ul {
    flex: 1;
    overflow: hidden;
}

.list li {
    display: flex;
    align-items: center;
    justify-content: space-between;
    height: 34px;
    padding: 0 5px;
}

.list li svg {
    width: 32px;
    height: 32px;
}

.list .selected {
    background: #3399ff;
    color: #fff;
}

.list .selected svg {
    fill: #000;
}

.question {
    font-family: var(--ui);
    font-size: 13px;
    font-weight: bold;
    text-anchor: middle;
}

.v-scroll {
    display: flex;
    flex-direction: column;
    align-items: center;
    width: 17px;
    padding: 7px 0;
    background: #f0f0f0;
}

.v-scroll svg {
    width: 7px;
    height: 4px;
    fill: #444;
}

.v-thumb {
    width: 15px;
    height: 33px;
    margin: 7px 0 auto;
    border: 1px solid #95989c;
    border-radius: 2px;
    background:
        repeating-linear-gradient(#5c6066 0 1px, transparent 1px 3px) center / 7px 7px no-repeat,
        linear-gradient(90deg, #f5f5f5 45%, #dcdee0 50%, #c5c8cc);
}

.options {
    display: flex;
    justify-content: space-between;
    padding-right: 1px;
}

.options + .options {
    margin-top: 7px;
}

.options label {
    display: flex;
    align-items: center;
    gap: 3px;
    height: 14px;
}

.options input {
    width: 13px;
    height: 13px;
    appearance: none;
    border: 1px solid #8e8f8f;
    background:
        url("data:image/svg+xml,%3Csvg xmlns='http://www.w3.org/2000/svg' viewBox='0 0 9 9'%3E%3Cpath d='M1.500 4L4 7L8 1' fill='none' stroke='%23404a8c' stroke-width='2'/%3E%3C/svg%3E") center / 9px 9px no-repeat,
        linear-gradient(135deg, #c5cad6, #f4f5f8);
    box-shadow: inset 0 0 0 1px #f4f4f4;
}

.mouse-cursor {
    position: absolute;
    left: 122px;
    top: 196px;
    width: 16px;
    height: 22px;
    fill: #fff;
    stroke: #222;
    filter: drop-shadow(2px 2px 1px rgba(0, 0, 0, 0.35));
}

/* Taskbar */
.taskbar {
    position: relative;
    display: flex;
    align-items: center;
    height: 40px;
    border-top: 1px solid #33455e;
    background: linear-gradient(90deg, #8494ad 0, #97a9c4 60px, #a9c0dd 500px, #a6bdda 80%, #7c8da8 86%, #74859f);
    box-shadow: inset 0 1px 0 #c5d5e8;
}

.start {
    width: 54px;
    height: 39px;
}

.start svg {
    width: 37px;
    height: 37px;
}

.task-buttons {
    display: flex;
    flex: 1;
    gap: 2px;
    padding-left: 5px;
}

.task-buttons button {
    width: 60px;
    height: 39px;
    border: 1px solid #4f607a;
    border-radius: 3px;
    background: linear-gradient(135deg, #c7d3e4, #a3b6d2 60%, #b3c6e0);
    box-shadow: inset 0 0 0 1px rgba(255, 255, 255, 0.6);
}

.task-buttons .active {
    background: linear-gradient(135deg, #e9eff6, #cfdbea);
}

.task-buttons svg {
    width: 32px;
    height: 32px;
}

.zip-icon {
    font-family: "Liberation Sans", Arial, sans-serif;
    font-size: 16px;
    font-weight: bold;
}

.zip-seven {
    fill: #fff;
}

.tray {
    display: flex;
    gap: 8px;
    margin-right: 18px;
}

.clock {
    display: flex;
    flex-direction: column;
    align-items: center;
    margin-right: 10px;
    color: #fff;
    line-height: 17px;
}

.show-desktop {
    width: 14px;
    height: 38px;
    border: 1px solid #4a596e;
    background: linear-gradient(135deg, #a8b4c4, #5a6a80 50%, #8796ab);
}
```
